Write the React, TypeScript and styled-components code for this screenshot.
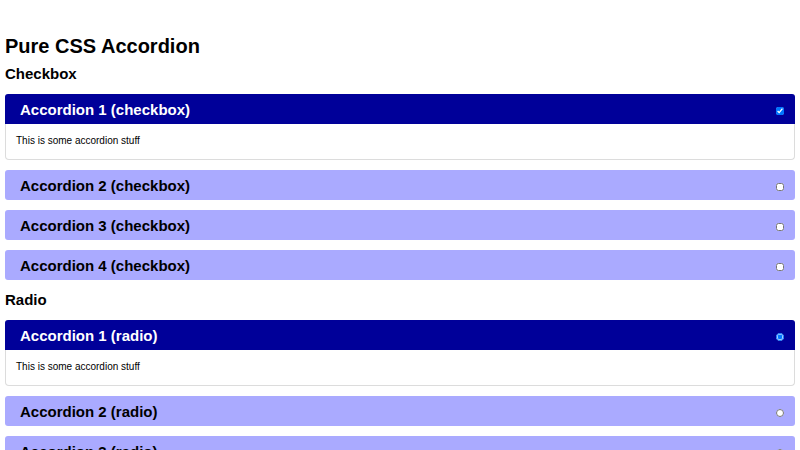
import React, { useState } from 'react'
import styled, { createGlobalStyle, css } from 'styled-components'

const GlobalStyle = createGlobalStyle`
  html, body {
    margin: 0;
    padding: 0;
    background: #fff;
  }

  body {
    padding: 0 5px;
    font-family: "Liberation Sans", Arial, sans-serif;
    color: #000;
  }
`

const Title = styled.h1`
  margin: 35px 0 6px;
  font-size: 20px;
  line-height: 23px;
  font-weight: bold;
`

const GroupTitle = styled.h2`
  margin: 0 0 10px;
  font-size: 15px;
  line-height: 20px;
  font-weight: bold;
`

const Item = styled.section`
  margin-bottom: 10px;
  border-radius: 4px;
`

const Header = styled.label<{ open: boolean }>`
  display: flex;
  align-items: center;
  justify-content: space-between;
  height: 30px;
  padding: 0 11px 0 15px;
  font-size: 15px;
  font-weight: bold;
  cursor: pointer;
  ${({ open }) =>
    open
      ? css`
          background: #000099;
          color: #fff;
          border-radius: 3px 3px 0 0;
        `
      : css`
          background: #aaaaff;
          color: #000;
          border-radius: 3px;
        `}
`

const Toggle = styled.input`
  width: 8px;
  height: 8px;
  margin: 3px 0 0;
  cursor: pointer;
`

const Body = styled.div`
  padding: 11px 10px 12px;
  font-size: 10px;
  line-height: 12px;
  background: #fff;
  border: 1px solid #dcdcdc;
  border-top: none;
  border-radius: 0 0 4px 4px;
`

type AccordionProps = {
  title: string
  type: 'checkbox' | 'radio'
  open: boolean
  onToggle: () => void
}

const Accordion: React.FC<AccordionProps> = ({ title, type, open, onToggle }) => (
  <Item>
    <Header open={open}>
      {title}
      <Toggle type={type} name={type === 'radio' ? 'accordion-radio' : undefined} checked={open} onChange={onToggle} />
    </Header>
    {open && <Body>This is some accordion stuff</Body>}
  </Item>
)

const items = [1, 2, 3, 4]

export default function App() {
  const [checked, setChecked] = useState<number[]>([1])
  const [radio, setRadio] = useState(1)

  const flip = (n: number) =>
    setChecked((list) => (list.includes(n) ? list.filter((x) => x !== n) : [...list, n]))

  return (
    <>
      <GlobalStyle />
      <Title>Pure CSS Accordion</Title>
      <GroupTitle>Checkbox</GroupTitle>
      {items.map((n) => (
        <Accordion
          key={`c${n}`}
          title={`Accordion ${n} (checkbox)`}
          type="checkbox"
          open={checked.includes(n)}
          onToggle={() => flip(n)}
        />
      ))}
      <GroupTitle>Radio</GroupTitle>
      {items.map((n) => (
        <Accordion
          key={`r${n}`}
          title={`Accordion ${n} (radio)`}
          type="radio"
          open={radio === n}
          onToggle={() => setRadio(n)}
        />
      ))}
    </>
  )
}
